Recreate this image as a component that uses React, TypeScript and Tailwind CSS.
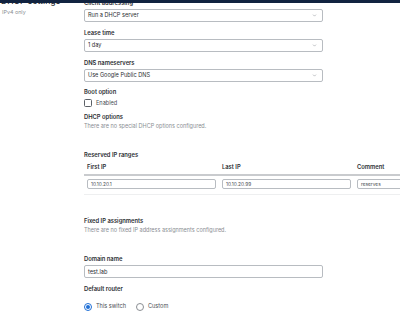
import { ChevronDown } from "lucide-react";

function Label({ children }: { children: React.ReactNode }) {
  return <div className="text-[5.8px] leading-[8px] font-semibold text-[#2a2d31]">{children}</div>;
}

function Select({ value }: { value: string }) {
  return (
    <div className="flex items-center justify-between w-[239px] h-[13px] border border-[#b8bcc1] rounded-[2px] bg-white pl-[3px] pr-[5px]">
      <span className="text-[5.6px] text-[#2a2d31]">{value}</span>
      <ChevronDown size={5} strokeWidth={2} className="text-[#6b7076]" />
    </div>
  );
}

function CellInput({ value }: { value: string }) {
  return (
    <div className="flex items-center w-[129px] h-[10px] border border-[#b8bcc1] rounded-[2px] bg-white pl-[3px]">
      <span className="text-[4.8px] text-[#4a4e53]">{value}</span>
    </div>
  );
}

export default function App() {
  return (
    <div
      className="relative w-[400px] h-[316px] overflow-hidden bg-white"
      style={{ fontFamily: "Inter, 'Noto Sans', sans-serif" }}
    >
      {/* fixed top nav, only its bottom edge is visible */}
      <div className="absolute top-0 left-0 w-full h-[3px] bg-[#112340] z-10" />

      <div className="flex">
        {/* Left column */}
        <div className="w-[84px] shrink-0 pl-[1px] mt-[-4px]">
          <div className="text-[8.6px] leading-[11px] font-medium text-[#2a2d31]">DHCP settings</div>
          <div className="text-[5.4px] leading-[7px] text-[#8a8e93] mt-[2px] pl-[1px]">IPv4 only</div>
        </div>

        {/* Right column */}
        <div className="flex flex-col mt-[-1px]">
          <Label>Client addressing</Label>
          <div className="mt-[2px]">
            <Select value="Run a DHCP server" />
          </div>

          <div className="mt-[7px]">
            <Label>Lease time</Label>
          </div>
          <div className="mt-[2px]">
            <Select value="1 day" />
          </div>

          <div className="mt-[7px]">
            <Label>DNS nameservers</Label>
          </div>
          <div className="mt-[2px]">
            <Select value="Use Google Public DNS" />
          </div>

          <div className="mt-[6px]">
            <Label>Boot option</Label>
          </div>
          <label className="flex items-center gap-[4px] mt-[3px]">
            <span className="w-[8px] h-[8px] border border-[#5b6066] rounded-[1.5px] bg-white" />
            <span className="text-[5.6px] text-[#4a4e53]">Enabled</span>
          </label>

          <div className="mt-[6px]">
            <Label>DHCP options</Label>
          </div>
          <div className="text-[5.5px] leading-[8px] text-[#8a8e93] mt-[1px]">
            There are no special DHCP options configured.
          </div>

          <div className="mt-[21px]">
            <Label>Reserved IP ranges</Label>
          </div>

          {/* table */}
          <div className="w-[420px] mt-[4px]">
            <div className="grid grid-cols-[135px_135px_150px] border-b-2 border-[#c9cbce] pb-[3px]">
              <div className="pl-[3px]"><Label>First IP</Label></div>
              <div className="pl-[3px]"><Label>Last IP</Label></div>
              <div className="pl-[3px]"><Label>Comment</Label></div>
            </div>
            <div className="grid grid-cols-[135px_135px_150px] border-b border-[#eeeff0] pt-[3px] pb-[5px]">
              <div className="pl-[3px]"><CellInput value="10.10.20.1" /></div>
              <div className="pl-[3px]"><CellInput value="10.10.20.99" /></div>
              <div className="pl-[3px]"><CellInput value="reserves" /></div>
            </div>
          </div>

          <div className="mt-[22px]">
            <Label>Fixed IP assignments</Label>
          </div>
          <div className="text-[5.5px] leading-[8px] text-[#8a8e93] mt-[1px]">
            There are no fixed IP address assignments configured.
          </div>

          <div className="mt-[21px]">
            <Label>Domain name</Label>
          </div>
          <div className="flex items-center w-[239px] h-[13px] border border-[#b8bcc1] rounded-[2px] bg-white pl-[3px] mt-[2px]">
            <span className="text-[5.6px] text-[#2a2d31]">test.lab</span>
          </div>

          <div className="mt-[7px]">
            <Label>Default router</Label>
          </div>
          <div className="flex items-center gap-[10px] mt-[9px]">
            <div className="flex items-center gap-[4px]">
              <span className="flex items-center justify-center w-[8px] h-[8px] rounded-full border border-[#1f6fd6] bg-white">
                <span className="w-[4px] h-[4px] rounded-full bg-[#1f6fd6]" />
              </span>
              <span className="text-[5.6px] text-[#4a4e53]">This switch</span>
            </div>
            <div className="flex items-center gap-[4px]">
              <span className="w-[8px] h-[8px] rounded-full border border-[#8a8e93] bg-white" />
              <span className="text-[5.6px] text-[#4a4e53]">Custom</span>
            </div>
          </div>
        </div>
      </div>
    </div>
  );
}
